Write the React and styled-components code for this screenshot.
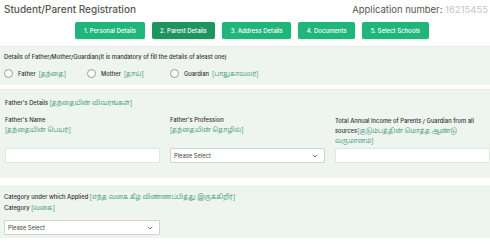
import styled, { createGlobalStyle } from "styled-components";

const GlobalStyle = createGlobalStyle`
    * { box-sizing: border-box; }
    body {
        margin: 0;
        background: #ffffff;
        font-family: "Inter", "Noto Sans", sans-serif;
        color: #333;
    }
`;

const steps = ["1. Personal Details", "2. Parent Details", "3. Address Details", "4. Documents", "5. Select Schools"];

function Chevron() {
    return (
        <svg width="8" height="8" viewBox="0 0 24 24" fill="none" stroke="#555" strokeWidth="2.5" strokeLinecap="round" strokeLinejoin="round">
            <path d="M6 9l6 6 6-6" />
        </svg>
    );
}

export default function App() {
    return (
        <>
            <GlobalStyle />
            <SCPage>
                <SCTop>
                    <SCTitle>Student/Parent Registration</SCTitle>
                    <SCAppNumber>Application number: <span>16215455</span></SCAppNumber>
                </SCTop>
                <SCSteps>
                    {steps.map((s, i) => (
                        <SCStep key={s} $active={i === 1}>{s}</SCStep>
                    ))}
                </SCSteps>

                <SCPanel $pad="6px 4px 7px">
                    <SCLabel>Details of Father/Mother/Guardian(It is mandatory of fill the details of aleast one)</SCLabel>
                    <SCRadios>
                        <SCRadio $w="83px"><SCCircle />Father<SCTamil>[தந்தை]</SCTamil></SCRadio>
                        <SCRadio $w="83px"><SCCircle />Mother<SCTamil>[தாய்]</SCTamil></SCRadio>
                        <SCRadio><SCCircle />Guardian<SCTamil>[பாதுகாவலர்]</SCTamil></SCRadio>
                    </SCRadios>
                </SCPanel>

                <SCPanel $pad="9px 0 15px 5px" $top="4px">
                    <SCLabel>Father's Details <SCTamil>[தந்தையின் விவரங்கள்]</SCTamil></SCLabel>
                    <SCGrid>
                        <SCField>
                            <SCLabel>Father's Name</SCLabel>
                            <SCTamilLine>[தந்தையின் பெயர்]</SCTamilLine>
                            <SCInput />
                        </SCField>
                        <SCField>
                            <SCLabel>Father's Profession</SCLabel>
                            <SCTamilLine>[தந்தையின் தொழில்]</SCTamilLine>
                            <SCSelect>Please Select<Chevron /></SCSelect>
                        </SCField>
                        <SCField>
                            <SCLabel $lh="10px">Total Annual Income of Parents / Guardian from all sources<SCTamil>[குடும்பத்தின் மொத்த ஆண்டு வருமானம்]</SCTamil></SCLabel>
                            <SCInput />
                        </SCField>
                    </SCGrid>
                </SCPanel>

                <SCPanel $pad="6px 4px 3px" $top="8px">
                    <SCLabel>Category under which Applied <SCTamil>[எந்த வகை கீழ் விண்ணப்பித்து இருக்கிறீர்]</SCTamil></SCLabel>
                    <SCLabel $top="3px">Category <SCTamil>[வகை]</SCTamil></SCLabel>
                    <SCSelect $w="156px" $top="8px">Please Select<Chevron /></SCSelect>
                </SCPanel>
            </SCPage>
        </>
    );
}

const SCPage = styled.div`
    width: 490px;
    height: 252px;
    overflow: hidden;
`;

const SCTop = styled.div`
    display: flex;
    justify-content: space-between;
    align-items: center;
    padding: 2px 2px 0 4px;
    height: 16px;
`;

const SCTitle = styled.h1`
    margin: 0;
    font-size: 10px;
    font-weight: 500;
    color: #555;
`;

const SCAppNumber = styled.div`
    font-size: 9.5px;
    color: #555;
    span { color: #c4c4c4; }
`;

const SCSteps = styled.div`
    display: flex;
    justify-content: center;
    gap: 7px;
    padding: 6px 0 0 14px;
`;

const SCStep = styled.div`
    height: 17px;
    padding: 0 8.5px;
    display: flex;
    align-items: center;
    border-radius: 2px;
    font-size: 6px;
    font-weight: 500;
    color: #ffffff;
    background: ${p => p.$active ? "#1e955f" : "#20b57b"};
    box-shadow: 0 1px 2px rgba(0,0,0,0.12);
`;

const SCPanel = styled.section`
    margin-top: ${p => p.$top || "7px"};
    padding: ${p => p.$pad};
    background: #eef5ee;
    border-top: 1px solid #e4ece4;
`;

const SCLabel = styled.div`
    margin-top: ${p => p.$top || "0"};
    font-size: 5.8px;
    font-weight: 500;
    line-height: ${p => p.$lh || "8px"};
    color: #333;
`;

const SCTamil = styled.span`
    font-family: "Noto Sans", "Noto Sans Tamil", sans-serif;
    font-size: 6.4px;
    font-weight: 400;
    color: #4f9f8c;
`;

const SCTamilLine = styled.div`
    margin-top: 2px;
    font-family: "Noto Sans", "Noto Sans Tamil", sans-serif;
    font-size: 6.4px;
    line-height: 8px;
    color: #4f9f8c;
`;

const SCRadios = styled.div`
    display: flex;
    margin-top: 8px;
`;

const SCRadio = styled.label`
    width: ${p => p.$w || "auto"};
    display: flex;
    align-items: center;
    gap: 3px;
    font-size: 5.8px;
    font-weight: 500;
    color: #333;
`;

const SCCircle = styled.span`
    width: 9px;
    height: 9px;
    border-radius: 50%;
    border: 1px solid #9a9a9a;
    background: #fff;
    margin-right: 2px;
`;

const SCGrid = styled.div`
    display: grid;
    grid-template-columns: 155px 155px 155px;
    gap: 10px;
    margin-top: 9px;
`;

const SCField = styled.div`
    display: flex;
    flex-direction: column;
    height: 47px;

    & > :last-child {
        margin-top: auto;
    }
`;

const SCInput = styled.div`
    height: 15px;
    background: #ffffff;
    border: 1px solid #e2e6e2;
    border-radius: 1px;
`;

const SCSelect = styled.div`
    width: ${p => p.$w || "auto"};
    margin-top: ${p => p.$top || "0"};
    height: 15px;
    display: flex;
    align-items: center;
    justify-content: space-between;
    padding: 0 5px 0 3px;
    background: #ffffff;
    border: 1px solid #cfd4cf;
    border-radius: 1px;
    font-size: 5.8px;
    color: #444;
`;
